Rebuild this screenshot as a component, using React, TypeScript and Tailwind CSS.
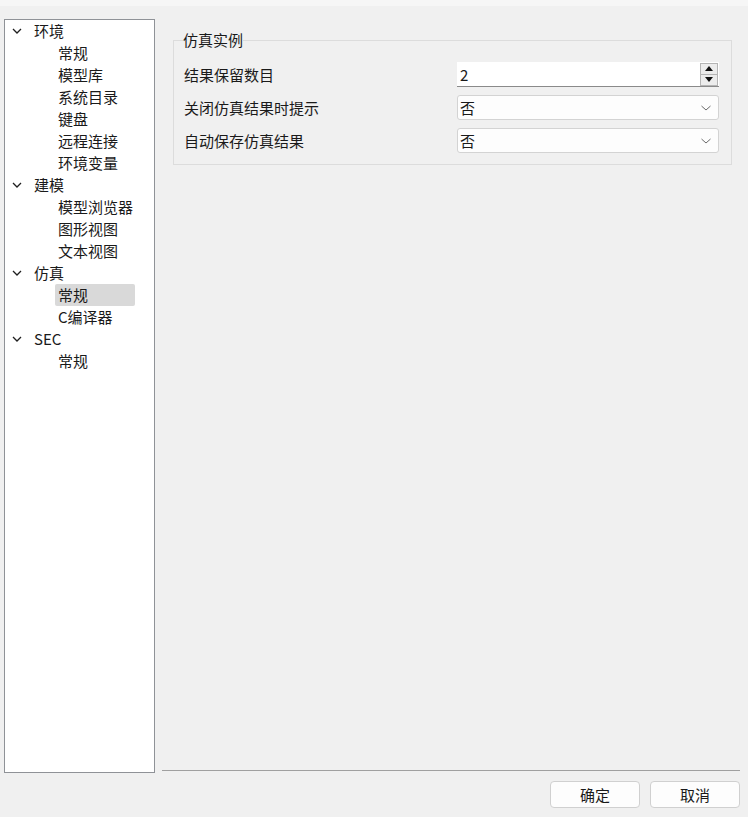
import React from "react";

const font = { fontFamily: '"Noto Sans CJK SC", "Noto Sans", sans-serif' };

type Node = { label: string; children?: string[] };

const tree: Node[] = [
  { label: "环境", children: ["常规", "模型库", "系统目录", "键盘", "远程连接", "环境变量"] },
  { label: "建模", children: ["模型浏览器", "图形视图", "文本视图"] },
  { label: "仿真", children: ["常规", "C编译器"] },
  { label: "SEC", children: ["常规"] },
];

function Chevron() {
  return (
    <svg width="12" height="12" viewBox="0 0 12 12" className="shrink-0">
      <path d="M2 4 L6 8 L10 4" fill="none" stroke="#1f1f1f" strokeWidth="1.3" />
    </svg>
  );
}

function SmallChevron() {
  return (
    <svg width="12" height="10" viewBox="0 0 12 10">
      <path d="M1.5 3 L6 7 L10.5 3" fill="none" stroke="#6b6b6b" strokeWidth="1" />
    </svg>
  );
}

function Combo({ value }: { value: string }) {
  return (
    <div className="h-[25px] bg-[#fdfdfd] border border-[#d3d3d3] rounded-[3px] flex items-center pl-[2px] pr-[6px] justify-between">
      <span className="text-[15px] leading-none text-[#1a1a1a]">{value}</span>
      <SmallChevron />
    </div>
  );
}

function SpinBox() {
  return (
    <div className="h-[25px] bg-white border-b border-[#8a8a8a] flex items-center pl-[3px] justify-between">
      <span className="text-[15px] leading-none text-[#1a1a1a]">2</span>
      <div className="flex flex-col w-[18px] h-[23px] mr-[1px]">
        <div className="flex-1 border border-[#b4b4b4] bg-[#ececec] flex items-center justify-center">
          <svg width="8" height="5" viewBox="0 0 8 5"><path d="M0 5 L4 0 L8 5 Z" fill="#111" /></svg>
        </div>
        <div className="flex-1 border border-t-0 border-[#b4b4b4] bg-[#ececec] flex items-center justify-center">
          <svg width="8" height="5" viewBox="0 0 8 5"><path d="M0 0 L4 5 L8 0 Z" fill="#111" /></svg>
        </div>
      </div>
    </div>
  );
}

export default function App() {
  return (
    <div className="w-[748px] h-[817px] bg-[#f0f0f0] flex flex-col text-[#1a1a1a]" style={font}>
      <div className="h-[6px] bg-[#f6f6f6]" />
      <div className="flex pt-[13px]">
        <div className="ml-[4px] w-[151px] h-[754px] bg-white border border-[#8f9297]">
          {tree.map((n) => (
            <div key={n.label}>
              <div className="h-[22px] flex items-center">
                <span className="ml-[6px] w-[22px] flex"><Chevron /></span>
                <span className="ml-[1px] pb-[2px] text-[15px] leading-none">{n.label}</span>
              </div>
              {n.children?.map((c) => {
                const selected = n.label === "仿真" && c === "常规";
                return (
                  <div key={c} className="h-[22px] flex items-center">
                    <div
                      className={
                        "ml-[50px] w-[80px] h-[22px] flex items-center pl-[3px] rounded-[2px] " +
                        (selected ? "bg-[#d9d9d9]" : "")
                      }
                    >
                      <span className="pb-[2px] text-[15px] leading-none">{c}</span>
                    </div>
                  </div>
                );
              })}
            </div>
          ))}
        </div>
        <div className="ml-[7px] w-[578px] h-[754px] flex flex-col">
          <fieldset className="ml-[11px] w-[559px] mt-[11px] border border-[#dcdcdc] pl-[10px] pr-[12px] pb-[11px] pt-[12px]">
            <legend className="-ml-[1px] px-0 text-[15px] leading-[20px]">仿真实例</legend>
            <div className="grid grid-cols-[1fr_262px] gap-y-[8px] items-center">
              <span className="text-[15px] leading-none">结果保留数目</span>
              <SpinBox />
              <span className="text-[15px] leading-none">关闭仿真结果时提示</span>
              <Combo value="否" />
              <span className="text-[15px] leading-none">自动保存仿真结果</span>
              <Combo value="否" />
            </div>
          </fieldset>
          <div className="mt-auto mb-[2px] h-px bg-[#a0a0a0]" />
        </div>
      </div>
      <div className="flex justify-end gap-[10px] pr-[8px] mt-[8px]">
        <button className="w-[90px] h-[27px] bg-[#fdfdfd] border border-[#d0d0d0] rounded-[4px] text-[15px] leading-none">确定</button>
        <button className="w-[90px] h-[27px] bg-[#fdfdfd] border border-[#d0d0d0] rounded-[4px] text-[15px] leading-none">取消</button>
      </div>
    </div>
  );
}
